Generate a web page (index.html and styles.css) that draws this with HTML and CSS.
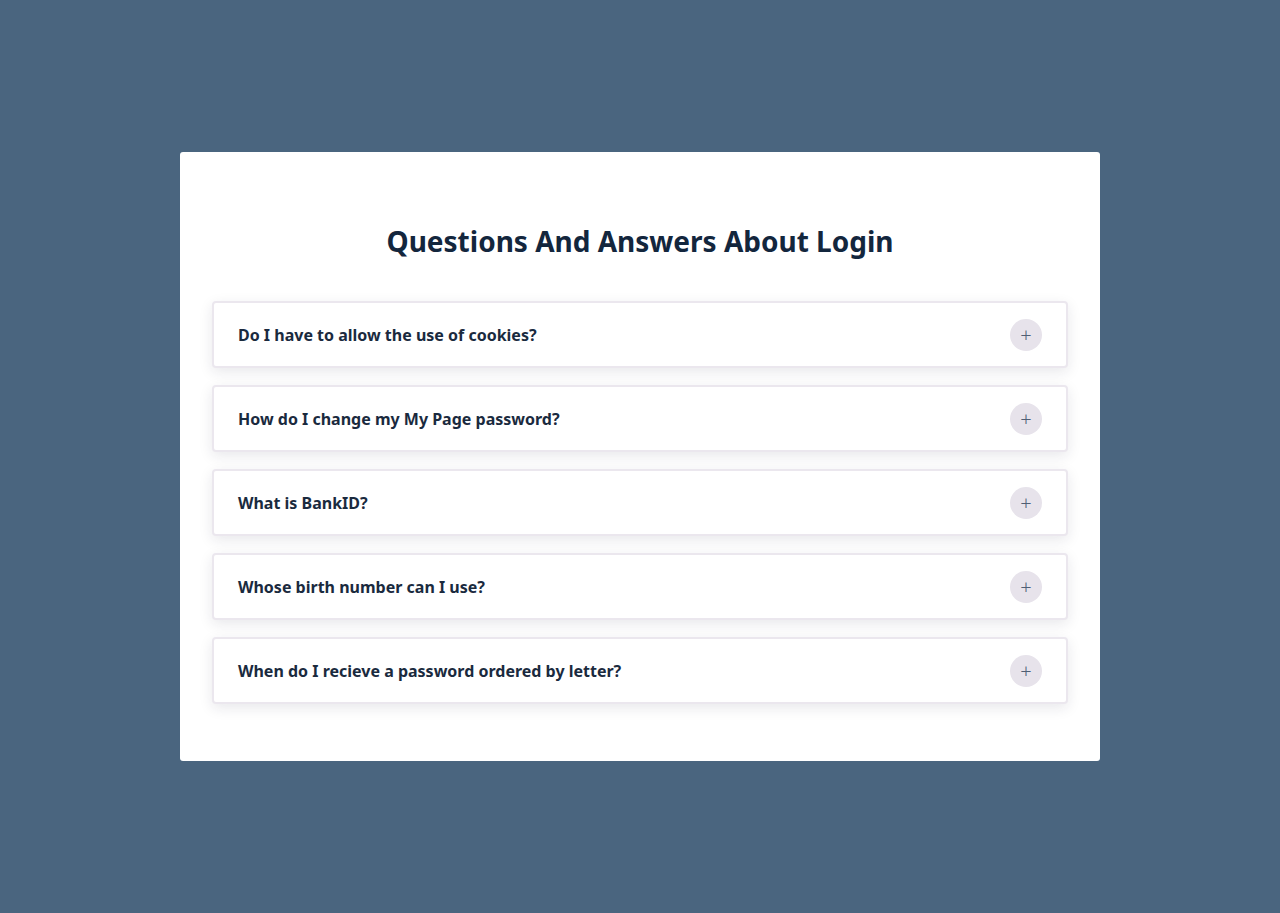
FILE: index.html
```html
<!DOCTYPE html>
<html lang="en">
<head>
<meta charset="utf-8">
<title>Questions And Answers About Login</title>
<link rel="stylesheet" href="styles.css">
</head>
<body>
<main class="page">
  <section class="card">
    <h1 class="title">Questions And Answers About Login</h1>
    <div class="faq">
      <div class="item"><span class="q">Do I have to allow the use of cookies?</span><span class="toggle">+</span></div>
      <div class="item"><span class="q">How do I change my My Page password?</span><span class="toggle">+</span></div>
      <div class="item"><span class="q">What is BankID?</span><span class="toggle">+</span></div>
      <div class="item"><span class="q">Whose birth number can I use?</span><span class="toggle">+</span></div>
      <div class="item"><span class="q">When do I recieve a password ordered by letter?</span><span class="toggle">+</span></div>
    </div>
  </section>
</main>
</body>
</html>
```
FILE: styles.css
```css
html, body {
  margin: 0;
  padding: 0;
}
body {
  background: #4a657f;
  font-family: "Noto Sans", "Open Sans", sans-serif;
  color: #14263c;
}
.page {
  display: flex;
  justify-content: center;
  align-items: flex-start;
  padding-top: 152px;
  min-height: 913px;
  box-sizing: border-box;
}
.card {
  width: 920px;
  box-sizing: border-box;
  background: #fff;
  border-radius: 3px;
  padding: 70px 32px 57px;
}
.title {
  margin: 0 0 41px;
  text-align: center;
  font-size: 28px;
  line-height: 38px;
  font-weight: 700;
  color: #13263d;
}
.faq {
  display: flex;
  flex-direction: column;
  gap: 17px;
}
.item {
  display: flex;
  align-items: center;
  justify-content: space-between;
  height: 67px;
  box-sizing: border-box;
  border: 2px solid #ebe7ee;
  border-radius: 4px;
  padding: 0 24px;
  background: #fff;
  box-shadow: 0 4px 14px rgba(30, 30, 60, 0.1);
}
.q {
  font-size: 16px;
  font-weight: 700;
  color: #1a2a3e;
}
.toggle {
  width: 32px;
  height: 32px;
  border-radius: 50%;
  background: #e7e3eb;
  color: #4f5f75;
  font-size: 20px;
  font-weight: 300;
  line-height: 32px;
  text-align: center;
}
```
